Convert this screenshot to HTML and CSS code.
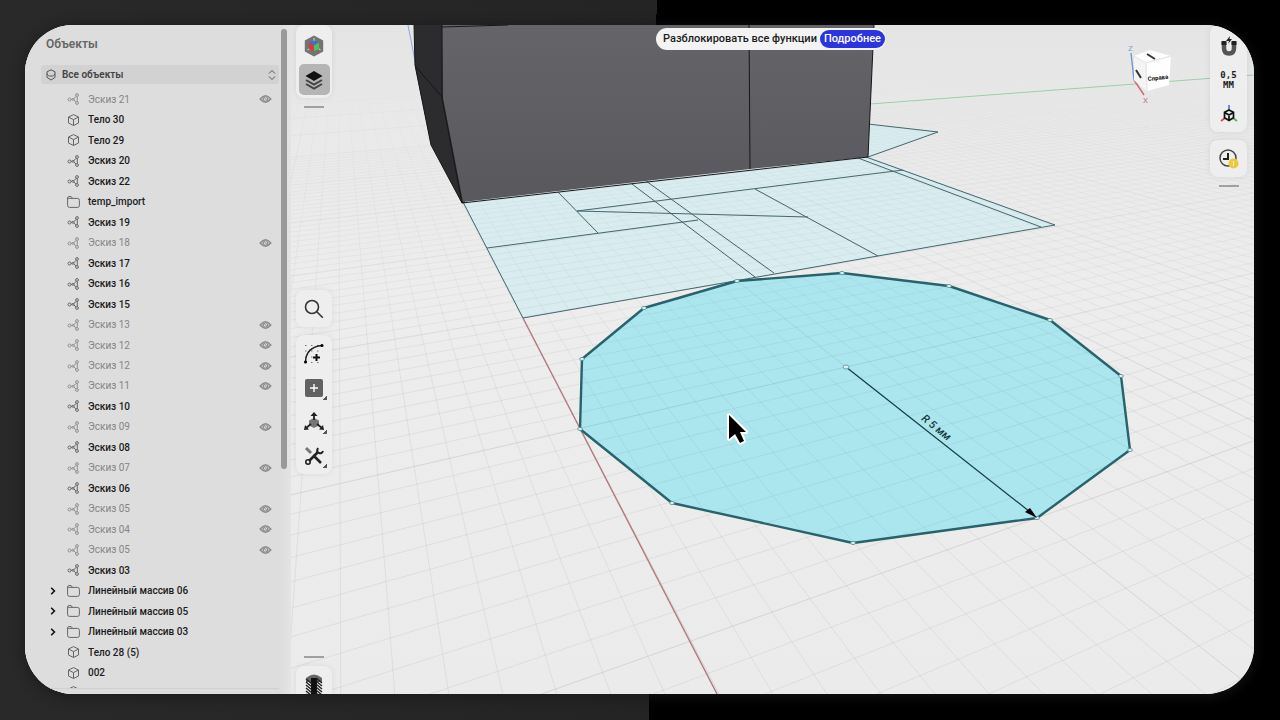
FILE: index.html
```html
<!DOCTYPE html>
<html lang="ru">
<head>
<meta charset="utf-8">
<title>Объекты</title>
<link rel="stylesheet" href="styles.css">
</head>
<body>
<svg class="defs" aria-hidden="true">
  <symbol id="sketch" viewBox="0 0 12 12"><g fill="none" stroke="currentColor"><circle cx="2" cy="6.500" r="1.500"/><circle cx="9.500" cy="2" r="1.400"/><circle cx="9.500" cy="10" r="1.400"/><circle cx="5.500" cy="6.300" r="1"/><path d="M3.500 6.400h1M6.300 5.600 9 3.200M6.400 6.800l2 2.200M9.800 3.400v5.200"/></g></symbol>
  <symbol id="cube" viewBox="0 0 12 12"><path fill="none" stroke="currentColor" stroke-linejoin="round" d="M6 .6 11 3v6l-5 2.500L1 9V3zM1.200 3.200 6 5.600l4.800-2.400M6 5.600v5.700"/></symbol>
  <symbol id="folder" viewBox="0 0 13 12"><path fill="none" stroke="currentColor" d="M.6 3V2q0-1.400 1.400-1.400h2.200L5.500 2.400h5q1.900 0 1.900 1.900v5.200q0 1.900-1.900 1.900h-8Q.6 11.400.6 9.500zM.6 3.200q.6-.8 1.600-.8h3.500"/></symbol>
  <symbol id="eye" viewBox="0 0 12 8"><path fill="currentColor" fill-opacity=".4" stroke="currentColor" stroke-width="1.200" d="M.6 4Q6-2.600 11.400 4 6 10.600.6 4z"/><circle cx="6" cy="4" r="2.200" fill="#ddd" stroke="currentColor"/><path stroke="currentColor" d="m4 1.500 4.200 5"/></symbol>
  <symbol id="chevron" viewBox="0 0 6 8"><path fill="none" stroke="currentColor" stroke-width="1.600" d="m1.200.8 3.200 3.200-3.200 3.200"/></symbol>
</svg>
<main class="stage">
  <svg class="scene" viewBox="25 25 1229 669" preserveAspectRatio="xMidYMid slice" role="img" aria-label="3D-сцена">
    <defs>
      <linearGradient id="fade" gradientUnits="userSpaceOnUse" x1="0" y1="80" x2="0" y2="694">
        <stop offset="0" stop-color="#000"/><stop offset=".06" stop-color="#333"/><stop offset=".3" stop-color="#999"/><stop offset=".5" stop-color="#fff"/>
      </linearGradient>
      <mask id="far" maskUnits="userSpaceOnUse" x="0" y="0" width="1280" height="720"><rect width="1280" height="720" fill="url(#fade)"/></mask>
      <linearGradient id="sky" x1="0" y1="0" x2="0" y2="1"><stop offset="0" stop-color="#e4e4e4"/><stop offset=".14" stop-color="#e9e9e9"/><stop offset=".4" stop-color="#ededed"/><stop offset="1" stop-color="#ebebeb"/></linearGradient>
      <linearGradient id="wall" x1="0" y1="0" x2="0" y2="1"><stop offset="0" stop-color="#656468"/><stop offset="1" stop-color="#59585d"/></linearGradient>
    </defs>
    <rect x="25" y="25" width="1229" height="669" fill="url(#sky)"/>
    <g class="fills">
      <path class="flat" d="M462 202 868 156l187 69-532 93zM868 124l70 8-70 25z"/>
      <path class="poly" d="M842 273 949 286 1050 320 1121 376 1130 450 1037 518 853 543 672 503 580 429 582 359 644 308 737 281z"/>
    </g>
    <g mask="url(#far)"><path id="minor" class="minor"/><path id="major" class="major"/></g>
    <path class="axis-y" d="M870 104 1254 75"/>
    <path class="axis-x" d="M523 318 717 694"/>
    <path class="axis-z" d="M408 25 416 66"/>
    <path class="edge" d="M463 202 523 318 1055 225 866 157M487 248 698 220M558 192l40 41M903 170 577 211l231 6M632 184l123 93M646 181l128 92M755 189l123 67M858 158l183 69M868 124l70 8-70 25"/>
    <path fill="#2c2c2f" d="M414 25h32v73l19 105h-3l-31-58-16-79z"/>
    <path fill="url(#wall)" d="M442 25h432l-6 132-118 12-287 33-20-104z"/>
    <path class="ridge" d="M442 25v73l20 105M416 67l27 31M414 25l1 40 16 80 31 58 406-46 6-132M749 25l1 144M442 27l66-2"/>
    <path class="outline" d="M842 273 949 286 1050 320 1121 376 1130 450 1037 518 853 543 672 503 580 429 582 359 644 308 737 281z"/>
    <g id="dots" class="dots"></g>
    <path class="radius" d="m846 367 188 148"/>
    <path d="m1037 518-12-6 5-4z"/>
    <ellipse cx="846" cy="367" rx="3" ry="2" class="dot"/>
    <text class="dim" transform="rotate(39 936 428)" x="936" y="431" text-anchor="middle">R 5 мм</text>
    <path class="cursor" d="M729 415v24l6-5 5 9 4-2-4-9h6z"/>
    <g class="navcube">
      <path stroke="#6f9ad8" d="m1131 53 3 27"/>
      <path stroke="#cf6672" d="m1134 80 10 15"/>
      <path fill="#fff" d="m1134 56 16-6 21 6-2 29-22 6-13-11z"/>
      <path fill="#f4f4f4" d="m1134 56 12 7 1 28-13-11z"/>
      <path stroke="#e8e8e8" fill="none" d="m1134 56 12 7 25-7M1146 63l1 28"/>
      <path stroke="#333" stroke-width="2" d="m1147 54 8 5M1136 70l5 8"/>
      <text class="face" transform="rotate(-7 1157 78)" x="1158" y="80" text-anchor="middle">Справа</text>
      <text x="1128" y="51" fill="#7aa0d6">Z</text><text x="1143" y="103" fill="#d0707c">X</text>
    </g>
  </svg>

  <div class="overlay">
    <aside class="panel">
      <div class="panel-main">
        <h1>Объекты</h1>
        <label class="filter">
          <svg width="10" height="12" viewBox="0 0 10 12" fill="none" stroke="#555"><path d="m5 .8 4 2v5.600L5 11 1 8.400V2.800zM1.200 4.600C1.200 8 8.800 8 8.800 4.600"/></svg>
          <select aria-label="Фильтр объектов"><option>Все объекты</option></select>
          <svg width="8" height="10" viewBox="0 0 8 10" fill="none" stroke="#555"><path d="m1 3.500 3-3 3 3M1 6.500l3 3 3-3"/></svg>
        </label>
        <ul class="list">
          <li class="off"><i></i><svg><use href="#sketch"/></svg><span>Эскиз 21</span><button aria-label="Показать"><svg><use href="#eye"/></svg></button></li>
          <li><i></i><svg><use href="#cube"/></svg><span>Тело 30</span></li>
          <li><i></i><svg><use href="#cube"/></svg><span>Тело 29</span></li>
          <li><i></i><svg><use href="#sketch"/></svg><span>Эскиз 20</span></li>
          <li><i></i><svg><use href="#sketch"/></svg><span>Эскиз 22</span></li>
          <li><i></i><svg><use href="#folder"/></svg><span>temp_import</span></li>
          <li><i></i><svg><use href="#sketch"/></svg><span>Эскиз 19</span></li>
          <li class="off"><i></i><svg><use href="#sketch"/></svg><span>Эскиз 18</span><button aria-label="Показать"><svg><use href="#eye"/></svg></button></li>
          <li><i></i><svg><use href="#sketch"/></svg><span>Эскиз 17</span></li>
          <li><i></i><svg><use href="#sketch"/></svg><span>Эскиз 16</span></li>
          <li><i></i><svg><use href="#sketch"/></svg><span>Эскиз 15</span></li>
          <li class="off"><i></i><svg><use href="#sketch"/></svg><span>Эскиз 13</span><button aria-label="Показать"><svg><use href="#eye"/></svg></button></li>
          <li class="off"><i></i><svg><use href="#sketch"/></svg><span>Эскиз 12</span><button aria-label="Показать"><svg><use href="#eye"/></svg></button></li>
          <li class="off"><i></i><svg><use href="#sketch"/></svg><span>Эскиз 12</span><button aria-label="Показать"><svg><use href="#eye"/></svg></button></li>
          <li class="off"><i></i><svg><use href="#sketch"/></svg><span>Эскиз 11</span><button aria-label="Показать"><svg><use href="#eye"/></svg></button></li>
          <li><i></i><svg><use href="#sketch"/></svg><span>Эскиз 10</span></li>
          <li class="off"><i></i><svg><use href="#sketch"/></svg><span>Эскиз 09</span><button aria-label="Показать"><svg><use href="#eye"/></svg></button></li>
          <li><i></i><svg><use href="#sketch"/></svg><span>Эскиз 08</span></li>
          <li class="off"><i></i><svg><use href="#sketch"/></svg><span>Эскиз 07</span><button aria-label="Показать"><svg><use href="#eye"/></svg></button></li>
          <li><i></i><svg><use href="#sketch"/></svg><span>Эскиз 06</span></li>
          <li class="off"><i></i><svg><use href="#sketch"/></svg><span>Эскиз 05</span><button aria-label="Показать"><svg><use href="#eye"/></svg></button></li>
          <li class="off"><i></i><svg><use href="#sketch"/></svg><span>Эскиз 04</span><button aria-label="Показать"><svg><use href="#eye"/></svg></button></li>
          <li class="off"><i></i><svg><use href="#sketch"/></svg><span>Эскиз 05</span><button aria-label="Показать"><svg><use href="#eye"/></svg></button></li>
          <li><i></i><svg><use href="#sketch"/></svg><span>Эскиз 03</span></li>
          <li><button class="open" aria-label="Развернуть"><svg><use href="#chevron"/></svg></button><svg><use href="#folder"/></svg><span>Линейный массив 06</span></li>
          <li><button class="open" aria-label="Развернуть"><svg><use href="#chevron"/></svg></button><svg><use href="#folder"/></svg><span>Линейный массив 05</span></li>
          <li><button class="open" aria-label="Развернуть"><svg><use href="#chevron"/></svg></button><svg><use href="#folder"/></svg><span>Линейный массив 03</span></li>
          <li><i></i><svg><use href="#cube"/></svg><span>Тело 28 (5)</span></li>
          <li><i></i><svg><use href="#cube"/></svg><span>002</span></li>
        </ul>
        <div class="peek"><svg><use href="#cube"/></svg></div>
      </div>
      <div class="scroll"></div>
    </aside>

    <nav class="tools">
      <div class="group">
        <div class="card top">
          <button aria-label="Материалы"><svg width="20" height="22" viewBox="0 0 20 22"><path fill="#737373" d="m10 .6 9.200 5v10.800l-9.200 5-9.200-5V5.600z"/><path stroke="#ddd" d="M10 3v4M3.500 15l3-2M16.500 15l-3-2"/><path fill="#4468e0" d="m10 5.500 5 2.300-5 2.500-5-2.500z"/><path fill="#d83b37" d="m5 7.800 5 2.500v6l-5-2.500z"/><path fill="#4fc358" d="m15 7.800-5 2.500v6l5-2.500z"/></svg></button>
          <button class="on" aria-label="Слои"><svg width="18" height="20" viewBox="0 0 18 20"><path fill="#111" d="m9 1 8.500 5L9 11 .5 6z"/><path fill="none" stroke="#444" stroke-width="2" d="m1 10 8 4.500 8-4.500M1 14l8 4.500 8-4.500"/></svg></button>
        </div>
        <div class="grip"></div>
      </div>
      <div class="group">
        <div class="card">
          <button aria-label="Поиск"><svg width="20" height="20" viewBox="0 0 20 20" fill="none" stroke="#333" stroke-width="1.600"><circle cx="8" cy="8" r="6.500"/><path d="m12.800 12.800 6 6"/></svg></button>
        </div>
        <div class="card stack">
          <button aria-label="Эскиз"><svg width="20" height="20" viewBox="0 0 20 20"><path fill="none" stroke="#777" stroke-dasharray="1.500 4.500" d="M1 1.500h18M1 7h18M1 13h18M1 18.500h18"/><path fill="none" stroke="#222" stroke-width="1.500" d="M1.500 18Q2 3 18 1.500"/><circle cx="1.500" cy="18" r="1.500"/><circle cx="18" cy="1.500" r="1.500"/><path stroke="#111" stroke-width="2" d="M12.500 10v7M9 13.500h7"/></svg></button>
          <button class="more" aria-label="Добавить"><svg width="18" height="18" viewBox="0 0 18 18"><rect width="18" height="18" rx="2" fill="#626262"/><path stroke="#fff" stroke-width="1.400" d="M9 5v8M5 9h8"/></svg></button>
          <button class="more" aria-label="Преобразовать"><svg width="20" height="20" viewBox="0 0 20 20"><path fill="#777" d="m10 6 5 2.500v5L10 16l-5-2.500v-5z"/><path fill="none" stroke="#222" stroke-width="1.800" d="M10 8V3M7 12l-5 4M13 12l5 4"/><path fill="#222" d="m10 0 3.500 4h-7zM0 18l1-5 4 4.500zM20 18l-1-5-4 4.500z"/></svg></button>
          <button class="more" aria-label="Инструменты"><svg width="20" height="20" viewBox="0 0 20 20"><path stroke="#777" stroke-width="3" d="m2 2 5 5"/><path stroke="#222" stroke-width="2.600" d="M5 15 14 6M9 9l8 8"/><circle cx="4" cy="16" r="2.200" fill="none" stroke="#222" stroke-width="1.600"/><path fill="none" stroke="#222" stroke-width="2" d="M14 2q-2 4 1 5t4-2"/></svg></button>
        </div>
      </div>
      <div class="group">
        <div class="grip"></div>
        <div class="card cut"><button aria-label="Штриховка"><svg width="18" height="24" viewBox="0 0 18 24"><path fill="#666" d="M1 4q8-7 16 0v4H1z"/><path fill="#111" d="M6 4h6v20H6z"/><path fill="none" stroke="#222" stroke-width="1.400" d="m1 5 6 5M1 8l6 5M1 11l6 5M1 14l6 5M1 17l6 5M1 20l4 4M11 4l6 5M11 7l6 5M11 10l6 5M11 13l6 5M11 16l6 5M11 19l6 5"/></svg></button></div>
      </div>
    </nav>

    <div class="center">
      <div class="banner"><span>Разблокировать все функции</span><button>Подробнее</button></div>
    </div>

    <div class="tools right">
      <div class="group">
        <div class="card snap">
          <button aria-label="Привязка"><svg width="18" height="20" viewBox="0 0 18 20"><path fill="none" stroke="#555" stroke-width="4.500" d="M4 6v6q0 5.500 5 5.500t5-5.500V6"/><path fill="#222" d="M1.500 5h5v4h-5zM11.500 5h5v4h-5zM10 0 6 5h3L8 8l4-5H9.500z"/></svg></button>
          <button class="step">0,5<br>ММ</button>
          <button aria-label="Оси"><svg width="18" height="18" viewBox="0 0 18 18" fill="none"><path stroke="#3b75dd" stroke-width="1.600" d="M9 0v6"/><path stroke="#d94050" stroke-width="1.600" d="m5 13-4 3"/><path stroke="#49b35a" stroke-width="1.600" d="m13 13 4 3"/><path stroke="#111" stroke-width="1.700" d="m9 5 4.500 2.300v5.400L9 15.500l-4.500-2.800V7.300zM4.500 7.500 9 10l4.500-2.500M9 10v5"/></svg></button>
        </div>
        <div class="card">
          <button aria-label="История"><svg width="20" height="20" viewBox="0 0 20 20"><circle cx="9" cy="9" r="8" fill="none" stroke="#444" stroke-width="1.500"/><path fill="none" stroke="#222" stroke-width="2" d="M9 4v6H4"/><circle cx="14.500" cy="14.500" r="5" fill="#edc93b"/><path stroke="#fff3b0" stroke-width="1.200" d="M14.500 12v5"/></svg></button>
        </div>
        <div class="grip"></div>
      </div>
    </div>
  </div>
</main>
<script src="scene.js"></script>
</body>
</html>
```
FILE: styles.css
```css
* { box-sizing: border-box; }
body {
  margin: 0;
  min-height: 100vh;
  padding: 25px 26px 26px 25px;
  display: flex;
  background: linear-gradient(90.6deg, #292929, #242424 51%, #000 51%);
  font-family: Roboto, "Noto Sans", sans-serif;
  font-size: 10px;
  color: #1c1c1c;
}
.defs { position: absolute; width: 0; height: 0; }
button, select {
  appearance: none;
  border: 0;
  padding: 0;
  background: none;
  font: inherit;
  color: inherit;
}
.stage {
  position: relative;
  flex: 1;
  display: flex;
  overflow: hidden;
  border-radius: 48px;
  background: #ebebeb;
  box-shadow: 0 2px 12px 2px rgba(24, 24, 24, .7);
}
.scene { position: absolute; inset: 0; width: 100%; height: 100%; }
.overlay { position: relative; flex: 1; display: flex; }

.flat { fill: #d9ecef; }
.poly { fill: #abe6ee; }
.minor { fill: none; stroke: #606878; stroke-opacity: .1; stroke-width: 1; }
.major { fill: none; stroke: #505060; stroke-opacity: .14; stroke-width: 1; }
.axis-y { stroke: #9ccfaa; }
.axis-x { stroke: #b5797c; stroke-width: 1.4; }
.axis-z { stroke: #8ba6dc; }
.edge { fill: none; stroke: #44666d; }
.ridge { fill: none; stroke: #17171a; }
.outline { fill: none; stroke: #28626c; stroke-width: 2.4; stroke-linejoin: round; }
.dots *, .dot { fill: #d7f2f3; stroke: #5e8d94; stroke-width: .8; }
.radius { stroke: #143c44; stroke-width: 1.2; }
.dim { font-size: 11px; font-style: italic; font-weight: 500; fill: #17383d; }
.cursor { fill: #000; stroke: #fff; stroke-width: 4; stroke-linejoin: round; paint-order: stroke; }
.navcube { font-size: 8px; stroke-width: 1.4; }
.navcube .face { font-size: 6px; font-weight: 800; fill: #222; }

.panel {
  width: 266px;
  display: flex;
  padding-left: 16px;
  background: linear-gradient(90deg, #dddddd 96%, #e4e4e4);
}
.panel-main {
  width: 238px;
  display: flex;
  flex-direction: column;
  padding-bottom: 5px;
}
h1 {
  margin: 0;
  padding: 10px 5px 11px;
  font-size: 12px;
  line-height: 19px;
  font-weight: 600;
  color: #666;
}
.filter {
  display: flex;
  align-items: center;
  gap: 6px;
  height: 19px;
  padding: 0 3px 0 5px;
  margin-bottom: 5px;
  border-radius: 3px;
  background: #d2d2d2;
  color: #444;
}
.filter select { flex: 1; font-weight: 600; }
.list {
  flex: 1;
  list-style: none;
  margin: 0;
  padding: 0;
  display: grid;
  grid-auto-rows: 1fr;
}
.list li {
  display: flex;
  align-items: center;
  font-weight: 500;
}
.list li > i, .open { width: 26px; flex: none; }
.open { display: flex; padding-left: 9px; color: #111; }
.list li > svg { width: 13px; height: 12px; margin-right: 8px; color: #666; }
.list li span { flex: 1; }
.list .off { color: #858585; font-weight: 400; }
.list .off > svg { color: #909090; }
.off button { display: flex; padding-right: 7px; }
.off button svg { width: 13px; height: 8px; color: #8a8a8a; }
.open svg { width: 6px; height: 8px; }
.peek { height: 6px; overflow: hidden; padding-left: 26px; border-bottom: 1px solid #d0d0d0; }
.peek svg { display: block; width: 13px; height: 12px; margin-top: 3px; color: #666; }
.scroll {
  width: 6px;
  height: 440px;
  margin: 4px 0 0 2px;
  border-radius: 3px;
  background: #999;
}

.tools {
  display: flex;
  flex-direction: column;
  justify-content: space-between;
  width: 36px;
  margin-left: 5px;
}
.tools.right { width: 37px; margin: 0 7px 0 0; }
.group { display: flex; flex-direction: column; gap: 8px; }
.card {
  display: flex;
  flex-direction: column;
  align-items: center;
  min-height: 37px;
  padding: 3px 0;
  border-radius: 8px;
  background: #eeeeee;
  box-shadow: 0 0 6px rgba(0, 0, 0, .08);
}
.card button {
  display: flex;
  align-items: center;
  justify-content: center;
  width: 31px;
  height: 31px;
  border-radius: 5px;
}
.card .on { background: #b5b5b5; }
.card.top { padding-top: 5px; gap: 3px; }
.card.stack { gap: 3px; }
.card .more {
  background: linear-gradient(135deg, transparent 50%, #555 50%) right 3px bottom 3px / 4px 4px no-repeat;
  border-radius: 0;
}
.card.cut { min-height: 28px; height: 28px; padding: 8px 0 0; border-radius: 8px 8px 0 0; }
.card.cut button { height: 24px; }
.card.snap { gap: 3px; padding: 5px 0 3px; }
.card .step {
  font: 700 9px/10px "DejaVu Sans Mono", monospace;
  text-align: center;
}
.grip { width: 20px; height: 2px; margin: 0 auto; background: #a0a0a0; }
.center { flex: 1; display: flex; justify-content: center; align-items: flex-start; }
.banner {
  display: flex;
  align-items: center;
  gap: 3px;
  margin-top: 3px;
  padding: 2px 1px 2px 7px;
  border-radius: 11px;
  background: #f3f3f3;
  font-size: 11px;
  line-height: 18px;
  font-weight: 500;
}
.banner button {
  padding: 0 4px;
  border-radius: 9px;
  background: #2b35df;
  color: #fff;
}
```
FILE: scene.js
```js
const NS = 'http://www.w3.org/2000/svg';

// Ground plane to screen; s and t are in units of 5 mm from the circle centre.
function project(s, t) {
  const w = 1 - 0.2733 * s + 0.1319 * t;
  return [(846 - 92.4 * s + 342.5 * t) / w, (367 + 9.4 * s - 4.8 * t) / w];
}
function segment(a, b) {
  return 'M' + a.map(v => v.toFixed(1)).join(' ') + 'L' + b.map(v => v.toFixed(1)).join(' ');
}
let minor = '';
let major = '';
for (let i = -80; i <= 30; i++) {
  const s = i / 10;
  const line = segment(project(s, (0.2733 * s - 0.9) / 0.1319), project(s, 25));
  if (i % 10 === 0) major += line; else if (i > -50) minor += line;
}
for (let i = -60; i <= 140; i++) {
  const t = i / 10;
  const line = segment(project(-12, t), project((0.9 + 0.1319 * t) / 0.2733, t));
  if (i % 10 === 0) major += line; else if (i < 90) minor += line;
}
document.getElementById('minor').setAttribute('d', minor);
document.getElementById('major').setAttribute('d', major);

const corners = [[842, 273], [949, 286], [1050, 320], [1121, 376], [1130, 450], [1037, 518],
  [853, 543], [672, 503], [580, 429], [582, 359], [644, 308], [737, 281]];
for (const [x, y] of corners) {
  const dot = document.createElementNS(NS, 'ellipse');
  dot.setAttribute('cx', x);
  dot.setAttribute('cy', y);
  dot.setAttribute('rx', 2.4);
  dot.setAttribute('ry', 1.6);
  document.getElementById('dots').append(dot);
}
```
